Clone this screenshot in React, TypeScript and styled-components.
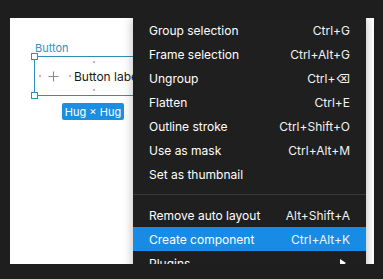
import React from 'react';
import styled, { createGlobalStyle } from 'styled-components';

const GlobalStyle = createGlobalStyle`
  html, body {
    margin: 0;
    padding: 0;
    background: #1e1e1e;
  }
  * { box-sizing: border-box; }
`;

const Stage = styled.div`
  width: 383px;
  height: 279px;
  padding: 18px 9px 15px 10px;
  background: #1e1e1e;
  font-family: Inter, "Noto Sans", "DejaVu Sans", sans-serif;
`;

const Canvas = styled.div`
  position: relative;
  width: 100%;
  height: 100%;
  background: #ffffff;
  overflow: hidden;
`;

const LayerName = styled.div`
  position: absolute;
  left: 25px;
  top: 23px;
  font-size: 11px;
  line-height: 14px;
  color: #2f92c2;
`;

const Selection = styled.div`
  position: absolute;
  left: 24px;
  top: 38px;
  width: 200px;
  height: 40px;
  border: 1px solid #2f8fb8;
  display: flex;
  align-items: center;
  padding-left: 4px;
`;

const Handle = styled.div<{ bottom?: boolean }>`
  position: absolute;
  left: -4px;
  top: ${(p) => (p.bottom ? '35px' : '-4px')};
  width: 7px;
  height: 7px;
  background: #fff;
  border: 1px solid #2f8fb8;
`;

const PadDot = styled.span`
  width: 2px;
  height: 2px;
  border-radius: 1px;
  background: #e07fb4;
  flex: none;
`;

const EdgeDot = styled(PadDot)<{ bottom?: boolean }>`
  position: absolute;
  left: 58px;
  top: ${(p) => (p.bottom ? '32px' : '4px')};
`;

const PlusIcon = styled.svg`
  width: 11px;
  height: 11px;
  margin: 0 10px 0 7px;
  flex: none;
`;

const ButtonLabel = styled.span`
  margin-left: 3px;
  font-size: 12px;
  color: #1a1a1a;
  white-space: nowrap;
`;

const SizeBadge = styled.div`
  position: absolute;
  left: 52px;
  top: 85px;
  width: 62px;
  height: 17px;
  border-radius: 2px;
  background: #1c8fe3;
  color: #fff;
  font-size: 11px;
  display: flex;
  align-items: center;
  justify-content: center;
  white-space: nowrap;
`;

const Menu = styled.div`
  position: absolute;
  left: 123px;
  top: 0;
  width: 233px;
  background: #1f1f1f;
  box-shadow: 0 0 10px rgba(0, 0, 0, 0.28);
  display: flex;
  flex-direction: column;
`;

const Item = styled.div<{ active?: boolean }>`
  height: 24px;
  padding: 0 16px;
  display: flex;
  align-items: center;
  justify-content: space-between;
  font-size: 12px;
  color: #ffffff;
  background: ${(p) => (p.active ? '#188ce4' : 'transparent')};
  white-space: nowrap;
`;

const Shortcut = styled.span`
  color: #f2f2f2;
`;

const Separator = styled.div`
  height: 1px;
  margin: 8px 0;
  background: #3a3a3a;
`;

const SubArrow = styled.span`
  width: 0;
  height: 0;
  border-top: 4px solid transparent;
  border-bottom: 4px solid transparent;
  border-left: 6px solid #fff;
  margin-right: 4px;
`;

type Entry = { label: string; keys?: string } | 'sep';

const entries: Entry[] = [
  { label: 'Group selection', keys: 'Ctrl+G' },
  { label: 'Frame selection', keys: 'Ctrl+Alt+G' },
  { label: 'Ungroup', keys: 'Ctrl+\u232B' },
  { label: 'Flatten', keys: 'Ctrl+E' },
  { label: 'Outline stroke', keys: 'Ctrl+Shift+O' },
  { label: 'Use as mask', keys: 'Ctrl+Alt+M' },
  { label: 'Set as thumbnail' },
  'sep',
  { label: 'Remove auto layout', keys: 'Alt+Shift+A' },
  { label: 'Create component', keys: 'Ctrl+Alt+K' },
];

export default function App() {
  return (
    <>
      <GlobalStyle />
      <Stage>
        <Canvas>
          <LayerName>Button</LayerName>
          <Selection>
            <Handle />
            <Handle bottom />
            <EdgeDot />
            <EdgeDot bottom />
            <PadDot />
            <PlusIcon viewBox="0 0 11 11">
              <path d="M5.5 0.5v10M0.5 5.5h10" stroke="#8a8a8a" strokeWidth="1.1" fill="none" />
            </PlusIcon>
            <PadDot />
            <ButtonLabel>Button label</ButtonLabel>
          </Selection>
          <SizeBadge>Hug × Hug</SizeBadge>

          <Menu>
            {entries.map((e, i) =>
              e === 'sep' ? (
                <Separator key={i} />
              ) : (
                <Item key={i} active={e.label === 'Create component'}>
                  <span>{e.label}</span>
                  {e.keys && <Shortcut>{e.keys}</Shortcut>}
                </Item>
              )
            )}
            <Item>
              <span>Plugins</span>
              <SubArrow />
            </Item>
          </Menu>
        </Canvas>
      </Stage>
    </>
  );
}
